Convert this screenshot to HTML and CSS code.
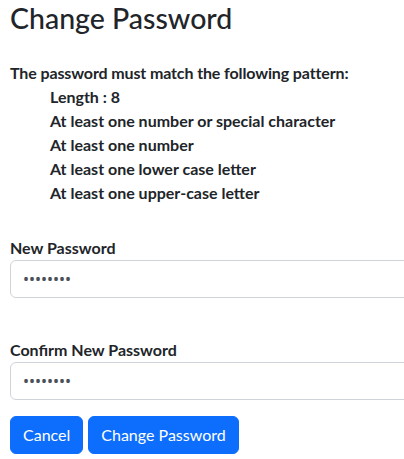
FILE: index.html
```html
<!DOCTYPE html>
<html>
<head>
<meta charset="utf-8">
<link rel="stylesheet" href="styles.css">
</head>
<body>
<div class="page">
  <h1 class="title">Change Password</h1>
  <div class="rules">
    <div class="rules-head">The password must match the following pattern:</div>
    <ul class="rules-list">
      <li>Length : 8</li>
      <li>At least one number or special character</li>
      <li>At least one number</li>
      <li>At least one lower case letter</li>
      <li>At least one upper-case letter</li>
    </ul>
  </div>
  <form class="form">
    <div class="field">
      <label class="label" for="pw1">New Password</label>
      <input class="input" id="pw1" type="password" value="password">
    </div>
    <div class="field field-second">
      <label class="label" for="pw2">Confirm New Password</label>
      <input class="input" id="pw2" type="password" value="password">
    </div>
    <div class="actions">
      <button type="button" class="btn">Cancel</button>
      <button type="button" class="btn">Change Password</button>
    </div>
  </form>
</div>
</body>
</html>
```

FILE: styles.css
```css
html, body {
  margin: 0;
  padding: 0;
  background: #fff;
}
html {
  overflow-x: hidden;
}
body {
  font-family: "Lato", "Open Sans", sans-serif;
  font-size: 16px;
  line-height: 24px;
  color: #212529;
}
.page {
  width: 520px;
  padding: 0 10px;
}
.title {
  margin: 0;
  padding-top: 1px;
  font-size: 28.5px;
  line-height: 34px;
  font-weight: 500;
}
.rules {
  margin-top: 26px;
  font-weight: 700;
}
.rules-head {
  letter-spacing: -0.12px;
}
.rules-list {
  list-style: none;
  margin: 0;
  padding: 0 0 0 40px;
}
.form {
  margin-top: 31px;
}
.field {
  display: flex;
  flex-direction: column;
}
.field-second {
  margin-top: 40px;
}
.label {
  font-weight: 700;
  line-height: 24px;
}
.input {
  box-sizing: border-box;
  height: 38px;
  width: 100%;
  border: 1px solid #ced4da;
  border-radius: 6px;
  padding: 6px 12px;
  font-size: 16px;
  color: #495057;
  font-family: "Noto Sans", sans-serif;
}
.actions {
  display: flex;
  gap: 5px;
  margin-top: 16px;
}
.btn {
  height: 38px;
  padding: 6px 12px;
  border: 1px solid #0d6efd;
  background: #0d6efd;
  color: #fff;
  border-radius: 6px;
  font-family: inherit;
  font-size: 16px;
  line-height: 24px;
}
```
